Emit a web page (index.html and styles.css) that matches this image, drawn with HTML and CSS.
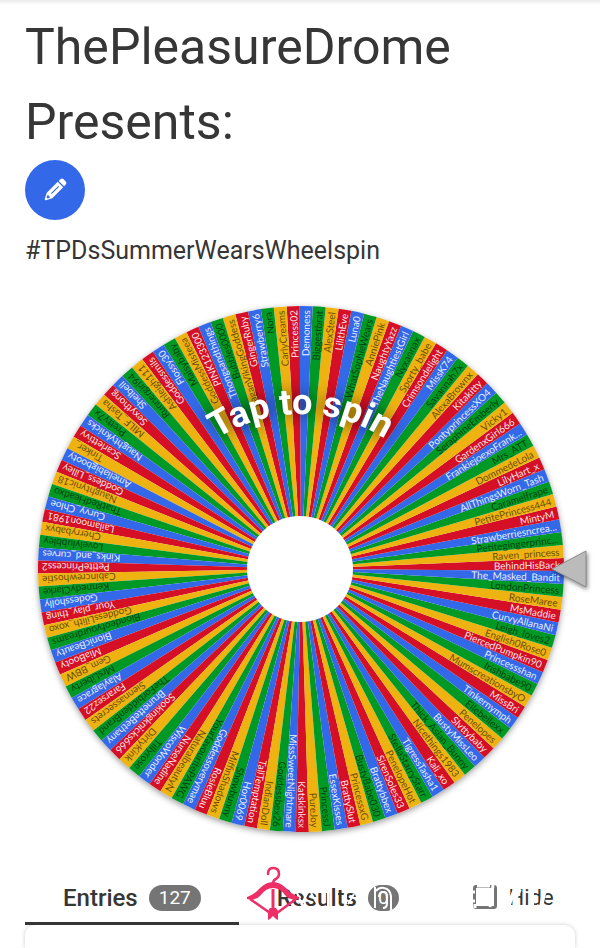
FILE: index.html
```html
<!DOCTYPE html>
<html lang="en">
<head>
    <meta charset="UTF-8">
    <meta name="viewport" content="width=device-width, initial-scale=1.0">
    <title>ThePleasureDrome Presents:</title>
    <link rel="stylesheet" href="styles.css">
</head>
<body>
    <header class="intro">
        <h1 class="title">ThePleasureDrome Presents:</h1>
        <button class="edit-button" type="button" aria-label="Edit title">
            <svg class="edit-icon" viewBox="0 0 28 28">
                <g transform="rotate(45 14 14)">
                    <path fill="#fff" d="M9.500 3.500V1a3 3 0 0 1 3-3h3a3 3 0 0 1 3 3v2.500z"/>
                    <path fill="#fff" fill-rule="evenodd" d="M9.500 5h9v18l-3.500 7q-1 1-2 0l-3.500-7zM13.400 8v12h1.300V8zM12 24l1 3h2l1-3z"/>
                </g>
            </svg>
        </button>
        <p class="description">#TPDsSummerWearsWheelspin</p>
    </header>

    <main class="wheel-area">
        <svg class="wheel" viewBox="0 0 600 600" role="img" aria-label="Wheel with 127 entries">
            <defs>
                <path id="spinArc" d="M146 300a155 155 0 0 1 310 0"/>
            </defs>
            <circle class="wheel-base" cx="301" cy="300" r="263"/>
            <g id="slices"></g>
            <circle class="hub" cx="300" cy="300" r="53"/>
            <text class="spin-text"><textPath href="#spinArc" startOffset="50%">Tap to spin</textPath></text>
            <path class="pointer" d="M552 300l34-18v36z"/>
        </svg>
    </main>

    <nav class="tabs">
        <a class="tab active" href="#entries">Entries <span class="count">127</span></a>
        <a class="tab" href="#results">Results <span class="count">0</span></a>
        <label class="hide-option"><input class="hide-check" type="checkbox"> Hide</label>
        <svg class="brand" viewBox="0 0 330 60" aria-hidden="true">
            <!-- white lettering strokes -->
            <g fill="none" stroke="#fff" stroke-width="2">
                <path d="M49 23l8 19M62 27l-7 13M65 28l7 12M82 25v16M91 24v18M100 22v17M108 29l-6 10"/>
                <path d="M129 22v21M130 26q3-4 8-3 6 1 7 8v14M133 32q0-5 4-5t4 5v6q0 5-4 5" />
                <path d="M222 27h7M222 36h7M231 21h13M247 20l-3 22M229 39v4" stroke-width="3"/>
                <path d="M262 42l7-18M274 24l-5 10M286 21v22M299 24l-4 18" stroke-width="4"/>
            </g>
            <!-- hanger with bow and arrow -->
            <g fill="none" stroke="#ed2e67" stroke-width="2.500">
                <path d="M22 9q0-6 5-6 6 0 6 6 0 3-3 5-3 1-3 5" stroke-linecap="round"/>
                <path d="M4 34l20 14M50 34L31 48"/>
                <path d="M27 24v22" stroke-width="3"/>
            </g>
            <path fill="#ed2e67" d="M27 17q7 0 13 6 5 6 13 9v2q-9 2-14-4-5-7-12-7t-12 7q-5 6-14 4v-2q8-3 13-9 6-6 13-6zM24 43h6l2 3v9l-2-1-3-3-3 3-2 1v-9z"/>
        </svg>
    </nav>
    <section class="entries-card" id="entries"></section>

    <script src="script.js"></script>
</body>
</html>
```
FILE: styles.css
```css
* {
    box-sizing: border-box;
}

body {
    display: flex;
    flex-direction: column;
    min-height: 100vh;
    margin: 0;
    background: linear-gradient(#ebebeb, #ffffff 5px);
    color: #363636;
    font-family: Roboto, sans-serif;
}

.intro {
    padding: 10px 25px 0;
}

.title {
    margin: 0;
    font-size: 50px;
    font-weight: 400;
    line-height: 75px;
}

.edit-button {
    display: flex;
    align-items: center;
    justify-content: center;
    width: 60px;
    height: 60px;
    padding: 0;
    border: none;
    border-radius: 50%;
    background-color: #3369e8;
    cursor: pointer;
}

.edit-icon {
    width: 24px;
    height: 24px;
    overflow: visible;
}

.description {
    margin: 12px 0 0;
    font-size: 25px;
    line-height: 37px;
}

.wheel {
    display: block;
    width: 100%;
}

.wheel-base {
    fill: #ffffff;
    filter: drop-shadow(0 2px 3px rgba(0, 0, 0, 0.4));
}

.hub {
    fill: #ffffff;
}

/* slice colours */
.red { fill: #d50f25; }
.yellow { fill: #eeb211; }
.green { fill: #009925; }
.blue { fill: #3369e8; }

.name {
    font-family: Lato, sans-serif;
    font-size: 10px;
    text-anchor: end;
    fill: rgba(255, 255, 255, 0.9);
}

.name.dark {
    fill: rgba(0, 0, 0, 0.6);
}

.spin-text {
    font-size: 36px;
    font-weight: 700;
    text-anchor: middle;
    fill: #ffffff;
    filter: drop-shadow(0 0 8px rgba(0, 0, 0, 0.7));
}

.pointer {
    fill: #bbbbbb;
    stroke: #8c8c8c;
    filter: drop-shadow(1px 2px 2px rgba(0, 0, 0, 0.5));
}

.tabs {
    position: relative;
    display: flex;
    height: 56px;
    margin: 0 25px;
    font-size: 24px;
    font-weight: 500;
}

.tab {
    display: flex;
    align-items: center;
    gap: 11px;
    padding: 5px 38px 0;
    border-bottom: 3px solid transparent;
    color: #363636;
    text-decoration: none;
}

.tab.active {
    border-bottom-color: #363636;
}

.count {
    padding: 0 10px;
    border-radius: 13px;
    background-color: #757575;
    color: #ffffff;
    font-size: 19px;
    font-weight: 400;
    line-height: 26px;
}

.hide-option {
    display: flex;
    align-items: center;
    gap: 12px;
    padding-left: 36px;
    font-size: 22px;
    font-weight: 400;
}

.hide-check {
    appearance: none;
    width: 24px;
    height: 24px;
    margin: 0;
    border: 3px solid #757575;
    border-radius: 3px;
}

/* logo lying over the tab bar */
.brand {
    position: absolute;
    top: -4px;
    left: 221px;
    width: 330px;
    height: 60px;
}

.entries-card {
    flex: 1;
    min-height: 22px;
    margin: 0 25px;
    border-radius: 10px 10px 0 0;
    background-color: #ffffff;
    box-shadow: 0 0 4px rgba(0, 0, 0, 0.2);
}
```
FILE: script.js
```js
// Names run counter-clockwise, starting at the pointer
const names = [
    "BehindHisBack", "Raven_princess", "Petitegingerprinc...", "Strawberriesncrea...",
    "MintyM", "PetitePrincess444", "Caramelfrape", "AllThingsWorn_Tash",
    "LilyHart_x", "DommedeLola", "Mrs_ATT", "FrankiejoexoFrank...",
    "GardenxGirl666", "Vicky1", "SeraphineEmberly", "PontyprincessXO4",
    "Kitakitty", "AlexaBrownx", "Savannah7x", "MissK74",
    "Crimsondelight", "Sporty_babe", "Nyxannax", "TheNaughtiestGirl",
    "NaughtyYazz", "AnniePink", "WhatSophieWears", "Luna0",
    "LilithEve", "AlexSteel", "Biggestbrat", "Demoness",
    "Princess02", "CarlyCreams", "Nora", "Strawberry6",
    "GingerRuby", "PaganVikingGoddess", "Bubbles0000", "Thongsandthings",
    "PINK123300", "GoddessMisteea", "Maisybaby", "Flossy30",
    "Goddessmils", "Ashleigh111", "Runnergirl94", "Shelbell",
    "Sexythong", "MILF_Tasha", "Pretty7x", "Naughtyknicks",
    "Scarlettivy", "Tinker_",
    "Ameliabigbooty", "Goddess_Lilley", "Naughtynic18", "ThatRedHeadxo",
    "Curvy_Chloe", "Lailamoon1981", "Cherrybabyx", "Lovelylubbley",
    "Kinks_and_curves", "PetitePrincess2", "Cabincrewhostie", "KennedyClarke",
    "Godessholly", "Your_play_thing", "GoddessLilith_xoxo", "Blondeofyourdreams",
    "BionicBeauty", "MiaBooty", "Gem_BBW", "MrsLiberty",
    "Alaylagrace", "Fararsez22", "Siennassecrets", "TheForbiddenBrand",
    "BrunetteBethany", "Sookingknicks666", "DirtyKink", "Tillyrose",
    "WiscoWonder", "NurseNadine", "NaturalbeautyN", "YourfavouritePAWG",
    "Goddessoverymae", "RosieBluu", "MiffinShadows", "Showbunny",
    "Hor0069", "TallTemptation", "IndianDoll", "Goddessbex26",
    "MissSweetNightmare", "Katskinksx", "PureJoy", "PrincessJ",
    "EssexKisses", "BrattySlut", "PrincessxG", "BustyBabe030",
    "Brattybbex", "SirenSoles33", "PenelopeHot", "StellaStarryStarr",
    "TigressTasha1", "Kali_xo", "Nicethings1983", "Thick_Asian_Bunny",
    "BustyMissLeo", "Slvttybaby", "Penelopes", "Ellebellexx",
    "Tinkernymph", "MissBri", "MumscreationsbyO", "Irishbabe90",
    "Princessshan", "PiercedPumpkin90", "English0Rose0", "Leigh_loves2",
    "CurvyAllanaNi", "MsMaddie", "RoseMaree", "LondonPrincess",
    "The_Masked_Bandit"
];

const colors = ["red", "yellow", "green", "blue"];
const svgNS = "http://www.w3.org/2000/svg";
const cx = 301;
const cy = 300;
const radius = 263;
const firstAngle = 1;
const seam = 54; // the colour cycle restarts here
const step = 360 / names.length;
const slices = document.getElementById("slices");

function point(angle) {
    const rad = angle * Math.PI / 180;
    return (cx + radius * Math.cos(rad)) + " " + (cy - radius * Math.sin(rad));
}

names.forEach(function (name, i) {
    const angle = firstAngle + i * step;
    const color = colors[(i < seam ? i : i + 1) % 4];

    const slice = document.createElementNS(svgNS, "path");
    slice.setAttribute("class", color);
    slice.setAttribute("d", "M" + cx + " " + cy + "L" + point(angle - step / 2) +
        "A" + radius + " " + radius + " 0 0 0 " + point(angle + step / 2) + "Z");
    slices.appendChild(slice);

    const label = document.createElementNS(svgNS, "text");
    label.setAttribute("class", color === "green" || color === "yellow" ? "name dark" : "name");
    label.setAttribute("x", cx + radius - 4);
    label.setAttribute("y", cy + 4);
    label.setAttribute("transform", "rotate(" + -angle + " " + cx + " " + cy + ")");
    label.textContent = name;
    slices.appendChild(label);
});
```
